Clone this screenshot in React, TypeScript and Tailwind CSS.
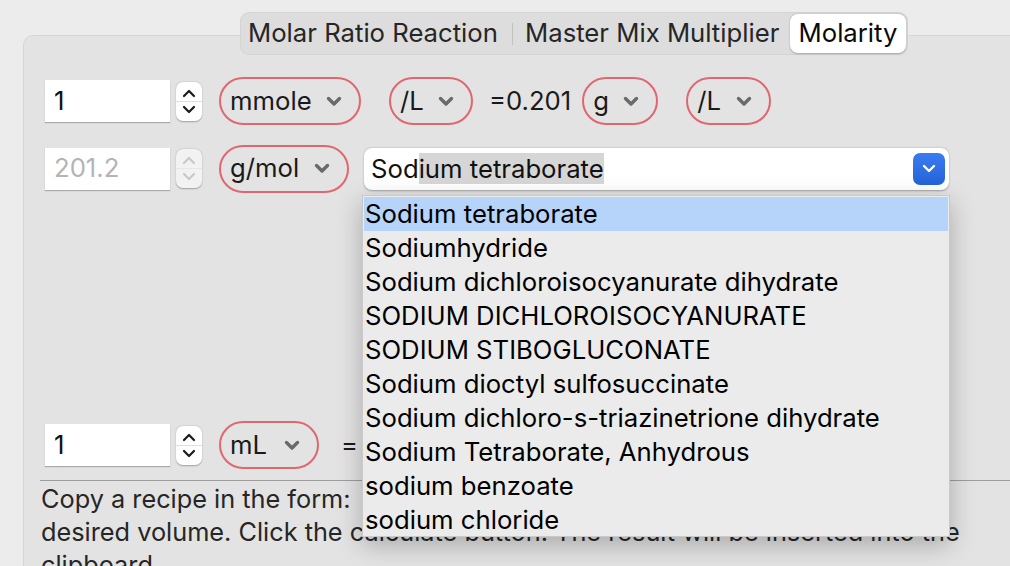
import React from "react";

const Chev = ({ color = "#6a6a6a" }: { color?: string }) => (
  <svg width="16" height="11" viewBox="0 0 16 11" className="shrink-0">
    <path d="M2.5 2.5 L8 8 L13.5 2.5" fill="none" stroke={color} strokeWidth="3.4" strokeLinecap="round" strokeLinejoin="round" />
  </svg>
);

const Stepper = ({ disabled = false }: { disabled?: boolean }) => {
  const c = disabled ? "#c9c9c9" : "#1a1a1a";
  return (
    <div className={`w-[26px] h-[39px] rounded-[7px] flex flex-col items-center justify-center ${disabled ? "bg-[#f2f2f2]" : "bg-white"} shadow-[0_0.5px_1.5px_rgba(0,0,0,0.3)]`}>
      <svg width="14" height="9" viewBox="0 0 14 9" className="mt-[2px]">
        <path d="M2 7 L7 2 L12 7" fill="none" stroke={c} strokeWidth="2.2" strokeLinecap="round" strokeLinejoin="round" />
      </svg>
      <div className={`w-full h-px my-[3px] ${disabled ? "bg-[#e6e6e6]" : "bg-[#dedede]"}`} />
      <svg width="14" height="9" viewBox="0 0 14 9" className="mb-[2px]">
        <path d="M2 2 L7 7 L12 2" fill="none" stroke={c} strokeWidth="2.2" strokeLinecap="round" strokeLinejoin="round" />
      </svg>
    </div>
  );
};

const NumInput = ({ value, disabled = false }: { value: string; disabled?: boolean }) => (
  <div className={`w-[125px] h-[42px] bg-white flex items-center pl-[9px] text-[25.7px] shadow-[0_1px_1px_rgba(0,0,0,0.25)] ${disabled ? "text-[#b4b4b4]" : "text-[#111]"}`}>
    {value}
  </div>
);

const Pill = ({ label, w }: { label: string; w: string }) => (
  <div className={`${w} h-[48px] rounded-full border-2 border-[#e0666f] flex items-center justify-between pl-[9px] pr-[17px] text-[25.7px] text-[#1a1a1a]`}>
    <span>{label}</span>
    <Chev />
  </div>
);

const items = [
  "Sodium tetraborate",
  "Sodiumhydride",
  "Sodium dichloroisocyanurate dihydrate",
  "SODIUM DICHLOROISOCYANURATE",
  "SODIUM STIBOGLUCONATE",
  "Sodium dioctyl sulfosuccinate",
  "Sodium dichloro-s-triazinetrione dihydrate",
  "Sodium Tetraborate, Anhydrous",
  "sodium benzoate",
  "sodium chloride",
];

export default function App() {
  return (
    <div className="relative w-[1010px] h-[566px] overflow-hidden bg-[#ececec] text-[#1a1a1a]" style={{ fontFamily: "Inter, 'Noto Sans', sans-serif" }}>
      <div className="flex pl-[240px] pt-[12px] relative z-10">
        <div className="h-[43px] rounded-[9px] bg-[#dddddd] flex items-center pl-[8px] pr-[2px] text-[25.7px] text-[#262626] shadow-[inset_0_0_0_1px_rgba(0,0,0,0.04)]">
          <span className="w-[264px] whitespace-nowrap">Molar Ratio Reaction</span>
          <div className="w-px h-[22px] bg-[#c2c2c2]" />
          <span className="pl-[12px] w-[277px] whitespace-nowrap">Master Mix Multiplier</span>
          <div className="w-[116px] h-[39px] rounded-[8px] bg-white flex items-center justify-center text-[#0a0a0a] shadow-[0_0.5px_2px_rgba(0,0,0,0.25)]">
            Molarity
          </div>
        </div>
      </div>
      <div className="ml-[23px] -mt-[20px] w-[1010px] h-[560px] rounded-[10px] bg-[#e3e3e3] shadow-[inset_0_0_0_1px_rgba(0,0,0,0.05)] pl-[22px]">
        <div className="flex items-center pt-[45px] h-[87px]">
          <NumInput value="1" />
          <div className="ml-[6px]"><Stepper /></div>
          <div className="ml-[17px]"><Pill label="mmole" w="w-[142px]" /></div>
          <div className="ml-[28px]"><Pill label="/L" w="w-[84px]" /></div>
          <span className="ml-[16px] text-[25.7px]">=0.201</span>
          <div className="ml-[11px]"><Pill label="g" w="w-[76px]" /></div>
          <div className="ml-[28px]"><Pill label="/L" w="w-[85px]" /></div>
        </div>
        <div className="flex items-center mt-[25px] h-[43px]">
          <NumInput value="201.2" disabled />
          <div className="ml-[6px]"><Stepper disabled /></div>
          <div className="ml-[17px]"><Pill label="g/mol" w="w-[130px]" /></div>
          <div className="ml-[15px] w-[585px] h-[42px] rounded-[8px] bg-white shadow-[0_0.5px_2px_rgba(0,0,0,0.3)] flex items-center justify-between pl-[7px] pr-[4px] text-[25.7px] text-[#111]">
            <span className="leading-[34px] whitespace-nowrap">Sod<span className="bg-[#d6d6d6]">ium tetraborate</span></span>
            <div className="w-[32px] h-[32px] rounded-[7px] bg-gradient-to-b from-[#3a7cf0] to-[#2563d8] flex items-center justify-center">
              <svg width="14" height="9" viewBox="0 0 14 9">
                <path d="M2 2 L7 7 L12 2" fill="none" stroke="white" strokeWidth="2.4" strokeLinecap="round" strokeLinejoin="round" />
              </svg>
            </div>
          </div>
        </div>
        <div className="flex items-center mt-[234px] h-[42px]">
          <NumInput value="1" />
          <div className="ml-[6px]"><Stepper /></div>
          <div className="ml-[17px]"><Pill label="mL" w="w-[100px]" /></div>
          <span className="ml-[22px] text-[25.7px]">=</span>
        </div>
        <div className="mt-[14px] -ml-[5px] h-px bg-[#9e9e9e]" />
        <div className="-ml-[4px] pt-[1px] text-[25.3px] leading-[33px] text-[#262626] whitespace-nowrap">
          <div>{"Copy a recipe in the form:\u00a0\u00a0 1 mmole NaCl, and enter the"}</div>
          <div>desired volume. Click the calculate button. The result will be inserted into the</div>
          <div>clipboard.</div>
        </div>
      </div>
      <div className="absolute left-[362px] top-[195px] w-[588px] h-[342px] bg-[#ebebeb] border border-[#c9c9c9] shadow-[0_8px_24px_rgba(0,0,0,0.25)] p-px z-20">
        {items.map((it, i) => (
          <div key={i} className={`h-[34px] flex items-center pl-px text-[25.7px] text-black whitespace-nowrap ${i === 0 ? "bg-[#b6d3fa]" : ""}`}>
            {it}
          </div>
        ))}
      </div>
    </div>
  );
}
